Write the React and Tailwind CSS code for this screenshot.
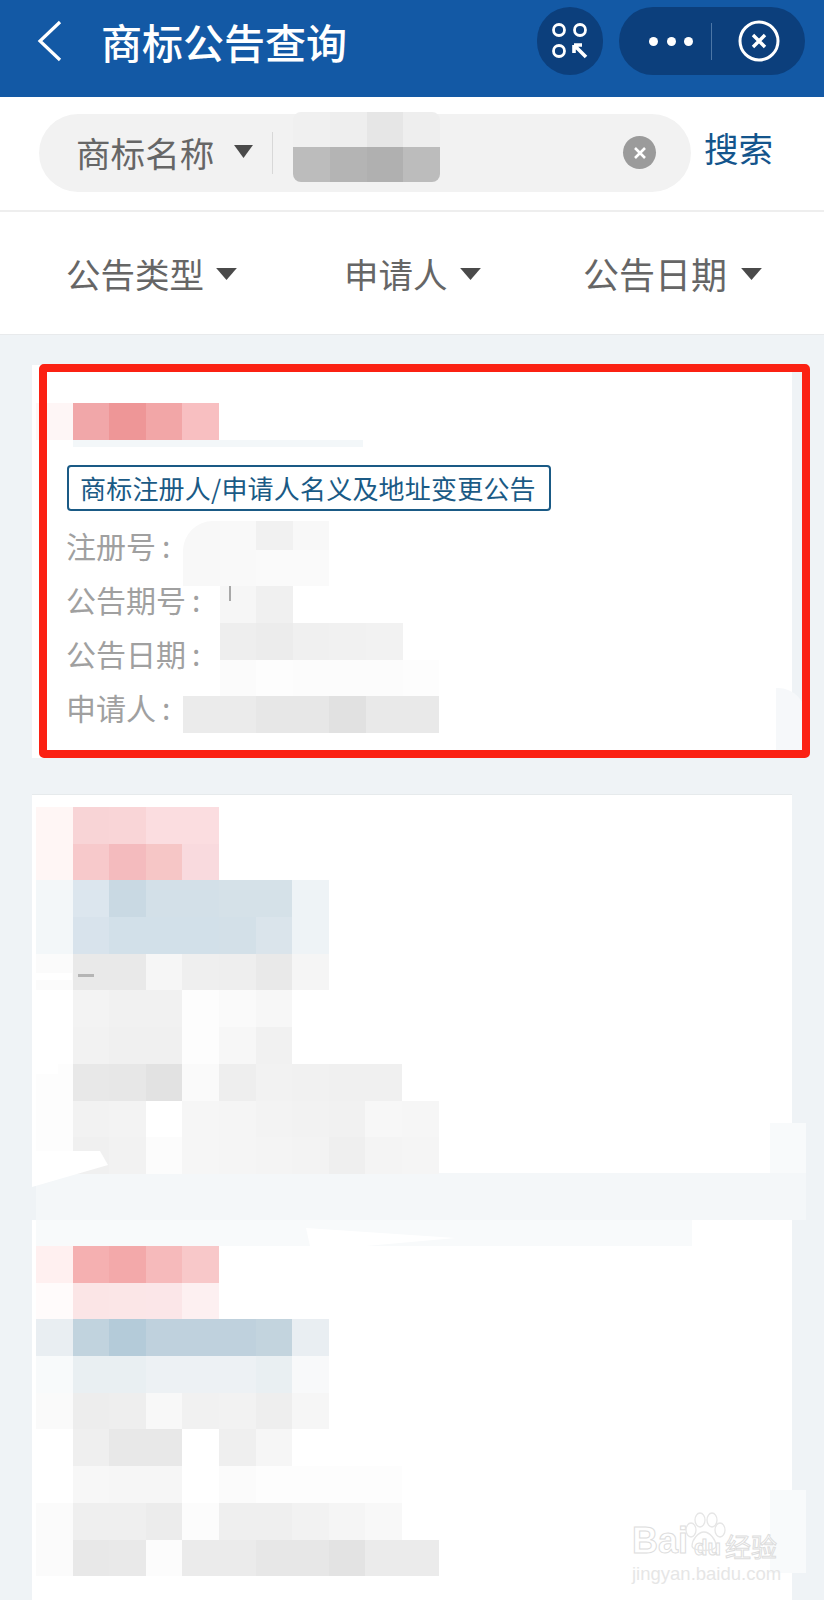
import React from 'react';

const Caret = ({ className }) => (
  <svg viewBox="0 0 20 14" preserveAspectRatio="none" className={className} fill="#4a4a4a">
    <path d="M1 1h18L10 14z" />
  </svg>
);

// pixelated blocks that hide the personal data in the screenshot
function Mosaic({ rows, className = '', short = false, cellH = 'h-[36.7px]' }) {
  return (
    <div className={`flex flex-col ${className}`}>
      {rows.map((row, r) => (
        <div key={r} className="flex">
          {row.map((color, c) => (
            <div
              key={c}
              className={`w-[36.6px] ${short && r === 0 ? 'h-[29px]' : cellH}`}
              style={{ backgroundColor: color }}
            />
          ))}
        </div>
      ))}
    </div>
  );
}

const nameCard1 = [['#fef6f6', '#f1a7a9', '#ee9697', '#f2a6a7', '#f8bfc1']];
const bodyCard1 = [
  ['#f8f8f8', '#f9f9f9', '#f1f1f1', '#f8f8f8'],
  ['#f8f8f8', '#f9f9f9', '#fafafa', '#fafafa'],
  ['transparent', '#f6f6f6', '#f0f0f0'],
  ['transparent', '#eeeeee', '#ececec', '#f0f0f0', '#f1f1f1', '#f2f2f2'],
  ['transparent', '#fbfbfb', '#fdfdfd', '#fcfcfc', '#fcfcfc', '#fcfcfc', '#fdfdfd'],
  ['#ebebeb', '#ebebeb', '#e7e7e7', '#e7e7e7', '#e1e1e1', '#e9e9e9', '#e9e9e9'],
];
const card2 = [
  ['#fff6f5', '#f8d4d6', '#f9d5d7', '#fbdde0', '#fbdde0'],
  ['#fff6f5', '#f7c9cb', '#f4bbbe', '#f6c6c6', '#f9dade'],
  ['#f3f7f9', '#dce6ee', '#c9d9e3', '#d3e0e8', '#d3e0e8', '#d5e1e8', '#d5e1e8', '#eef3f6'],
  ['#f3f7f9', '#d8e3ec', '#d2e0e9', '#d2e0e9', '#d2e0e9', '#d3e0e8', '#dae4eb', '#eef3f6'],
  ['#fbfbfb', '#e9e9e9', '#e9e9e9', '#f6f6f6', '#efefef', '#eeeeee', '#e9e9e9', '#f5f5f5'],
  ['#ffffff', '#f3f3f3', '#f1f1f1', '#f1f1f1', '#fdfdfd', '#fafafa', '#f7f7f7'],
  ['#ffffff', '#f2f2f2', '#f0f0f0', '#f0f0f0', '#fdfdfd', '#f7f7f7', '#f1f1f1'],
  ['#fdfdfd', '#e8e8e8', '#e7e7e7', '#e2e2e2', '#fafafa', '#eeeeee', '#f2f2f2', '#f1f1f1', '#f0f0f0', '#f0f0f0'],
  ['#fdfdfd', '#f2f2f2', '#f3f3f3', '#ffffff', '#f6f6f6', '#f5f5f5', '#f3f3f3', '#f2f2f2', '#f1f1f1', '#f7f7f7', '#f6f6f6'],
  ['#fdfdfd', '#f0f0f0', '#f2f2f2', '#fcfcfc', '#f6f6f6', '#f5f5f5', '#f4f4f4', '#f3f3f3', '#efefef', '#f4f4f4', '#f5f5f5'],
];
const card3 = [
  ['#fff0f0', '#f5b0b1', '#f3a9aa', '#f6babb', '#f8c8c9'],
  ['#fffbfb', '#fbe5e6', '#fbe6e7', '#fbe6e8', '#fdf0f1'],
  ['#e9eef2', '#c1d3de', '#b4cbd9', '#bfd1dd', '#bfd1dd', '#bfd1dd', '#c3d4de', '#e9eef2'],
  ['#f8fafb', '#e9eff2', '#e9eff2', '#edf1f4', '#edf1f4', '#edf1f4', '#e9eff2', '#f8f9fa'],
  ['#fafafa', '#ededed', '#eeeeee', '#f8f8f8', '#f1f1f1', '#f2f2f2', '#eeeeee', '#f6f6f6'],
  ['#ffffff', '#efefef', '#e8e8e8', '#e8e8e8', '#ffffff', '#efefef', '#f6f6f6'],
  ['#ffffff', '#f7f7f7', '#f6f6f6', '#f6f6f6', '#ffffff', '#fbfbfb', '#fdfdfd', '#fdfdfd', '#fdfdfd', '#fdfdfd'],
  ['#fbfbfb', '#efefef', '#efefef', '#ececec', '#fcfcfc', '#efefef', '#efefef', '#f2f2f2', '#f5f5f5', '#f8f8f8'],
  ['#fbfbfb', '#e8e8e8', '#e9e9e9', '#fcfcfc', '#ebebeb', '#ebebeb', '#e7e7e7', '#e7e7e7', '#e3e3e3', '#ebebeb', '#ebebeb'],
];
const searchBlur = [
  ['#f0f0f0', '#eeeeee', '#e6e6e6', '#eeeeee'],
  ['#bcbcbc', '#b4b4b4', '#b0b0b0', '#bcbcbc'],
];

function Header() {
  return (
    <div className="h-[97px] bg-[#1359a5] flex items-center text-white pb-[15px]">
      <svg viewBox="0 0 26 42" className="w-[26px] h-[42px] ml-[37px]" fill="none" stroke="white" strokeWidth="3.2">
        <path d="M23 2 3 21l20 19" />
      </svg>
      <div className="ml-[38px] text-[41px] leading-none font-medium">商标公告查询</div>
      <div className="ml-auto w-[66px] h-[68px] rounded-full bg-[#0c3f7c] flex items-center justify-center">
        <svg viewBox="0 0 40 40" className="w-[40px] h-[40px]" fill="none" stroke="white" strokeWidth="2.8">
          <circle cx="9" cy="9" r="5.5" />
          <circle cx="30" cy="9" r="5.5" />
          <circle cx="9" cy="30" r="5.5" />
          <path d="M24 24h8M24 24v8M24 24l12 12" strokeWidth="3.6" />
        </svg>
      </div>
      <div className="ml-[16px] mr-[19px] w-[186px] h-[68px] rounded-full bg-[#0c3f7c] flex items-center">
        <div className="w-[92px] flex justify-end gap-[8.5px] pr-[18px]">
          <div className="w-[9px] h-[9px] rounded-full bg-white" />
          <div className="w-[9px] h-[9px] rounded-full bg-white" />
          <div className="w-[9px] h-[9px] rounded-full bg-white" />
        </div>
        <div className="w-px h-[37px] bg-[#4c76a6]" />
        <svg viewBox="0 0 42 42" className="w-[42px] h-[42px] ml-[26px]" fill="none" stroke="white">
          <circle cx="21" cy="21" r="19" strokeWidth="3" />
          <path d="M15 15l12 12M27 15 15 27" strokeWidth="3.4" />
        </svg>
      </div>
    </div>
  );
}

function SearchBar() {
  return (
    <div className="h-[115px] bg-white border-b-2 border-[#eeeeee] flex items-center pb-[2px]">
      <div className="ml-[39px] w-[652px] h-[78px] rounded-full bg-[#f2f2f2] flex items-center">
        <span className="ml-[37px] text-[34.6px] leading-none text-[#666666]">商标名称</span>
        <Caret className="w-[21px] h-[14px] ml-[19px] mt-[-4px]" />
        <div className="ml-[18px] w-px h-[42px] bg-[#d8d8d8]" />
        <Mosaic rows={searchBlur} cellH="h-[35px]" className="ml-[20px] mb-[11px] rounded-[8px] overflow-hidden" />
        <div className="ml-auto mr-[35px] w-[33px] h-[33px] rounded-full bg-[#9b9b9b] flex items-center justify-center">
          <svg viewBox="0 0 14 14" className="w-[14px] h-[14px]" fill="none" stroke="white" strokeWidth="2.6">
            <path d="M2 2l10 10M12 2 2 12" />
          </svg>
        </div>
      </div>
      <span className="ml-[13px] mb-[10px] text-[34.6px] leading-none text-[#14558c]">搜索</span>
    </div>
  );
}

function Filters() {
  return (
    <div className="h-[122px] bg-white grid grid-cols-[278px_239px_1fr] items-center pl-[66px]">
      <div className="flex items-center">
        <span className="text-[34.5px] leading-none text-[#666666]">公告类型</span>
        <Caret className="w-[23px] h-[13px] ml-[11px]" />
      </div>
      <div className="flex items-center">
        <span className="text-[34.5px] leading-none text-[#666666]">申请人</span>
        <Caret className="w-[23px] h-[13px] ml-[11px]" />
      </div>
      <div className="flex items-center">
        <span className="text-[36px] leading-none text-[#666666]">公告日期</span>
        <Caret className="w-[23px] h-[13px] ml-[13px]" />
      </div>
    </div>
  );
}

function FirstCard() {
  const labels = ['注册号', '公告期号', '公告日期', '申请人'];
  return (
    <div className="relative bg-white h-[393px] mt-[30px] pt-[38px] pl-[4px]">
      <Mosaic rows={nameCard1} />
      <div className="ml-[37px] w-[290px] h-[7px] bg-[#f3f7f9]" />
      <div className="ml-[31px] mt-[18px] w-[484px] h-[46px] border-2 border-[#1a5a85] rounded-[4px] flex items-center pl-[11px] text-[26px] tracking-[0.2px] leading-none text-[#1a5a85] whitespace-nowrap">
        商标注册人/申请人名义及地址变更公告
      </div>
      <div className="flex mt-[10px]">
        <div className="relative z-10 w-[147px] mt-[-2px] pl-[30px] text-[30px] text-[#a0a0a0] whitespace-nowrap">
          {labels.map((t) => (
            <div key={t} className="h-[54px] flex items-center">
              {t}
              <span className="ml-[6px]">:</span>
            </div>
          ))}
        </div>
        <Mosaic rows={bodyCard1} short className="rounded-tl-[30px] overflow-hidden" />
      </div>
      <div className="absolute left-[197px] top-[221px] w-[2px] h-[15px] bg-[#a8a8a8]" />
      <div className="absolute right-[-14px] bottom-[8px] w-[30px] h-[62px] rounded-tr-[28px] bg-[#f6f8fa]" />
      {/* red annotation box */}
      <div className="absolute left-[7px] right-[-18px] top-[-1px] bottom-0 border-8 border-[#fb2113] rounded-[5px]" />
    </div>
  );
}

function Watermark() {
  return (
    <div className="absolute left-[600px] top-[292px] w-[150px] font-['Liberation_Sans',sans-serif] whitespace-nowrap">
      <svg viewBox="0 0 44 40" className="absolute left-[50px] top-0 w-[44px] h-[40px]" fill="none" stroke="#e6e6e6" strokeWidth="1.3">
        <ellipse cx="9" cy="18" rx="5" ry="7" />
        <ellipse cx="18" cy="8" rx="5" ry="7" />
        <ellipse cx="30" cy="8" rx="5" ry="7" />
        <ellipse cx="38" cy="18" rx="5" ry="7" />
        <path d="M22 20c-6 0-12 8-12 14s24 6 24 0-6-14-12-14z" />
      </svg>
      <div className="flex items-end h-[47px] leading-none font-bold text-transparent [-webkit-text-stroke:1px_#dddddd]">
        <span className="text-[36px]">Bai</span>
        <span className="text-[22px] ml-[6px]">du</span>
        <span className="text-[26px] ml-[4px] font-['Noto_Sans_CJK_SC',sans-serif] font-normal">经验</span>
      </div>
      <div className="mt-[6px] text-[18.5px] leading-none text-[#e6e6e6]">jingyan.baidu.com</div>
    </div>
  );
}

export default function App() {
  return (
    <div className="w-[824px] h-[1600px] overflow-hidden bg-[#eff3f6] font-['Noto_Sans_CJK_SC',sans-serif]">
      <Header />
      <SearchBar />
      <Filters />
      <div className="h-[1px] bg-[#e8eaec]" />
      <div className="px-[32px]">
        <FirstCard />

        <div className="relative bg-white h-[379px] mt-[36px] pt-[12px] pl-[4px] border-t border-[#e6eaec]">
          <Mosaic rows={card2} />
          {/* retouching marks left on the picture */}
          <div className="absolute left-0 top-[178px] w-[40px] h-[7px] bg-white" />
          <div className="absolute left-[46px] top-[179px] w-[16px] h-[3px] bg-[#b5b5b5]" />
          <div className="absolute left-0 top-[259px] w-[26px] h-[20px] bg-white" />
          <svg viewBox="0 0 76 36" className="absolute left-0 top-[356px] w-[76px] h-[36px]" fill="white">
            <path d="M0 0h68l8 14L0 36z" />
          </svg>
          <div className="absolute right-[-14px] bottom-0 w-[36px] h-[50px] bg-[#f8fafb]" />
        </div>

        <div className="ml-[4px] w-[770px] h-[47px] bg-[#f4f7f9]" />

        <div className="relative bg-white h-[380px] pl-[4px]">
          <div className="w-[656px] h-[26px] bg-[#f8fafb]" />
          <svg viewBox="0 0 150 18" className="absolute left-[274px] top-[8px] w-[150px] h-[18px]" fill="white">
            <path d="M0 0l150 10-90 8H4z" />
          </svg>
          <Mosaic rows={card3} />
          <div className="absolute right-[-14px] top-[270px] w-[36px] h-[83px] bg-[#f8fafb]" />
          <Watermark />
        </div>
      </div>
    </div>
  );
}
